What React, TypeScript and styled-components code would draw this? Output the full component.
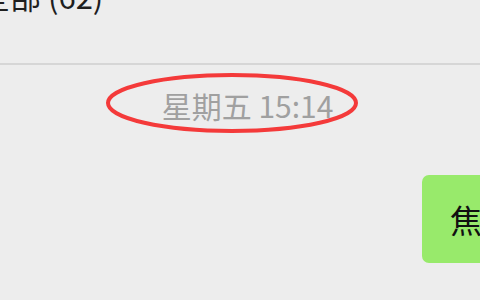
import React from 'react';
import styled, { createGlobalStyle } from 'styled-components';

const GlobalStyle = createGlobalStyle`
  html, body {
    margin: 0;
    padding: 0;
    background: #ededed;
  }
  body {
    font-family: "Noto Sans CJK SC", "Noto Sans", sans-serif;
  }
`;

const Window = styled.div`
  width: 480px;
  height: 300px;
  overflow: hidden;
  background: #ededed;
  display: flex;
  flex-direction: column;
`;

const Header = styled.div`
  height: 65px;
  flex-shrink: 0;
  border-bottom: 2px solid #d6d6d6;
  overflow: hidden;
  box-sizing: border-box;
`;

const Title = styled.div`
  margin: -24px 0 0 -21px;
  font-size: 31px;
  line-height: 40px;
  color: #1f1f1f;
  white-space: nowrap;
`;

const TimeRow = styled.div`
  display: flex;
  justify-content: center;
  padding: 20px 0 0 15px;
`;

const TimeWrap = styled.div`
  position: relative;
  padding: 0 22px;
`;

const TimeText = styled.span`
  font-size: 30px;
  line-height: 40px;
  color: #a0a0a0;
  white-space: nowrap;
`;

const Circle = styled.svg`
  position: absolute;
  left: -36px;
  top: -13px;
  width: 256px;
  height: 62px;
  overflow: visible;
  pointer-events: none;
`;

const MessageRow = styled.div`
  display: flex;
  padding-top: 50px;
`;

const Bubble = styled.div`
  margin-left: 422px;
  flex-shrink: 0;
  background: #98ea6b;
  border-radius: 7px;
  padding: 21px 28px 21px;
  font-size: 32px;
  line-height: 46px;
  color: #111;
  white-space: nowrap;
`;

export default function App() {
  return (
    <>
      <GlobalStyle />
      <Window>
        <Header>
          <Title>全部 (62)</Title>
        </Header>
        <TimeRow>
          <TimeWrap>
            <TimeText>星期五 15:14</TimeText>
            <Circle viewBox="0 0 256 62">
              <ellipse cx="128" cy="31" rx="124" ry="28" fill="none" stroke="#f43a3a" strokeWidth="4" />
            </Circle>
          </TimeWrap>
        </TimeRow>
        <MessageRow>
          <Bubble>焦点新闻</Bubble>
        </MessageRow>
      </Window>
    </>
  );
}
